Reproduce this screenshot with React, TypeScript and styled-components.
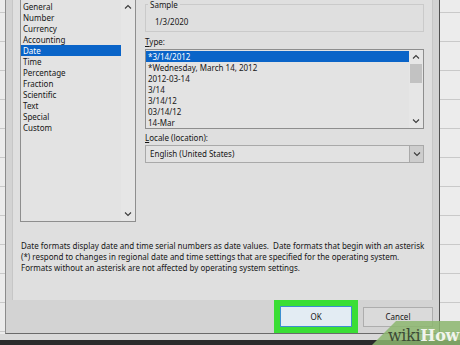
import styled, { createGlobalStyle } from 'styled-components';

const categories = [
  'General',
  'Number',
  'Currency',
  'Accounting',
  'Date',
  'Time',
  'Percentage',
  'Fraction',
  'Scientific',
  'Text',
  'Special',
  'Custom',
];

const types = [
  '*3/14/2012',
  '*Wednesday, March 14, 2012',
  '2012-03-14',
  '3/14',
  '3/14/12',
  '03/14/12',
  '14-Mar',
];

const GlobalStyle = createGlobalStyle`
  html, body {
    margin: 0;
    padding: 0;
    background: #2b2b2b;
  }
  * {
    box-sizing: border-box;
  }
`;

const Screen = styled.div`
  position: relative;
  width: 460px;
  height: 345px;
  overflow: hidden;
  display: flex;
  flex-direction: column;
  background: #2b2b2b;
  font-family: 'Noto Sans', 'Open Sans', sans-serif;
  font-size: 8px;
  color: #161616;
`;

const Main = styled.div`
  display: flex;
  height: 334px;
`;

const SheetEdge = styled.div<{ $width: number }>`
  width: ${({ $width }) => $width}px;
  flex-shrink: 0;
  background: repeating-linear-gradient(
    180deg,
    #ececec 0px,
    #ececec 12px,
    #c9c9c9 12px,
    #c9c9c9 13px,
    #ececec 13px,
    #ececec 29px
  );
`;

const BottomStrip = styled.div`
  height: 6px;
  background: #d9d9d9;
`;

const Dialog = styled.div`
  width: 435px;
  display: flex;
  flex-direction: column;
  background: #d3d3d3;
  border-left: 1px solid #8c8c8c;
  border-right: 1px solid #505050;
  border-bottom: 1px solid #6a6a6a;
`;

const TabPanel = styled.div`
  height: 300px;
  margin: 0 6px;
  background: #dfdfdf;
  border-left: 1px solid #c6c6c6;
  border-right: 1px solid #c6c6c6;
  padding-left: 7px;
  display: flex;
  flex-direction: column;
`;

const TopRow = styled.div`
  display: flex;
  gap: 9px;
`;

const ListBox = styled.div<{ $height: number }>`
  height: ${({ $height }) => $height}px;
  border: 1px solid #8e8e8e;
  background: #e3e3e3;
  display: flex;
`;

const CategoryBox = styled(ListBox)`
  width: 116px;
  margin-top: -1px;
`;

const Items = styled.div`
  flex: 1;
  padding-top: 1px;
  display: flex;
  flex-direction: column;
`;

const Item = styled.div<{ $selected?: boolean }>`
  height: 11px;
  line-height: 11px;
  padding-left: 2px;
  white-space: nowrap;
  background: ${({ $selected }) => ($selected ? '#0a64c8' : 'transparent')};
  color: ${({ $selected }) => ($selected ? '#ffffff' : '#161616')};
`;

const ScrollBar = styled.div`
  width: 14px;
  display: flex;
  flex-direction: column;
  align-items: center;
  justify-content: space-between;
  background: #e6e6e6;
`;

const ScrollTrack = styled.div`
  flex: 1;
  width: 12px;
  padding-top: 1px;
`;

const Thumb = styled.div`
  height: 19px;
  background: #c2c2c2;
`;

const ArrowBox = styled.div`
  height: 13px;
  width: 14px;
  display: flex;
  align-items: center;
  justify-content: center;
`;

const RightColumn = styled.div`
  width: 279px;
  display: flex;
  flex-direction: column;
`;

const SampleGroup = styled.fieldset`
  margin: -1px 0 0 0;
  padding: 0 0 0 9px;
  height: 33px;
  border: 1px solid #cacaca;
  min-width: 0;
`;

const Legend = styled.legend`
  padding: 0 2px;
  margin-left: -7px;
  line-height: 11px;
`;

const SampleValue = styled.div`
  margin-top: 6px;
  line-height: 11px;
`;

const FieldLabel = styled.div<{ $gap: number }>`
  margin-top: ${({ $gap }) => $gap}px;
  line-height: 12px;
  height: 12px;
`;

const Access = styled.span`
  text-decoration: underline;
`;

const TypeBox = styled(ListBox)`
  margin-top: 1px;
`;

const Select = styled.div`
  margin-top: 1px;
  height: 18px;
  border: 1px solid #a9a9a9;
  background: #e2e2e2;
  display: flex;
`;

const SelectValue = styled.div`
  flex: 1;
  padding-left: 4px;
  line-height: 16px;
`;

const SelectButton = styled.div`
  width: 14px;
  background: #cdcdcd;
  border-left: 1px solid #a9a9a9;
  display: flex;
  align-items: center;
  justify-content: center;
`;

const Description = styled.p`
  margin: 18px 0 0 1px;
  line-height: 11px;
  width: 410px;
`;

const Footer = styled.div`
  flex: 1;
  display: flex;
  justify-content: flex-end;
  align-items: center;
  gap: 5px;
  padding-right: 6px;
`;

const Highlight = styled.div`
  border: 6px solid #3ade35;
`;

const Button = styled.button<{ $default?: boolean }>`
  width: ${({ $default }) => ($default ? 72 : 70)}px;
  height: ${({ $default }) => ($default ? 21 : 20)}px;
  margin: 0;
  padding: 0;
  font-family: inherit;
  font-size: 8px;
  color: #161616;
  background: ${({ $default }) => ($default ? '#e3ecf3' : '#dadada')};
  border: 1px solid ${({ $default }) => ($default ? '#3c8fd0' : '#adadad')};
  display: block;
`;

const Watermark = styled.div`
  position: absolute;
  right: 0;
  bottom: 0;
  width: 88px;
  height: 24px;
  background: rgba(140, 182, 110, 0.85);
  clip-path: polygon(24px 0, 100% 0, 100% 100%, 0 100%);
  display: flex;
  align-items: flex-end;
  justify-content: flex-end;
  padding-right: 1px;
  font-family: 'DejaVu Serif', 'Liberation Serif', serif;
  font-size: 16px;
  font-weight: bold;
  letter-spacing: -0.3px;
  line-height: 19px;
`;

const Wiki = styled.span`
  color: #3c4a36;
  font-weight: normal;
`;

const How = styled.span`
  color: #f1f4ec;
`;

const Chevron = ({ up }: { up?: boolean }) => (
  <svg width="8" height="5" viewBox="0 0 8 5">
    <polyline
      points={up ? '1,4.5 4,1.5 7,4.5' : '1,0.5 4,3.5 7,0.5'}
      fill="none"
      stroke="#3a3a3a"
      strokeWidth="1.1"
    />
  </svg>
);

const App = () => {
  return (
    <Screen>
      <GlobalStyle />
      <Main>
        <SheetEdge $width={5} />
        <Dialog>
          <TabPanel>
            <TopRow>
              <CategoryBox $height={223}>
                <Items>
                  {categories.map((name) => (
                    <Item key={name} $selected={name === 'Date'}>
                      {name}
                    </Item>
                  ))}
                </Items>
                <ScrollBar>
                  <ArrowBox>
                    <Chevron up />
                  </ArrowBox>
                  <ArrowBox>
                    <Chevron />
                  </ArrowBox>
                </ScrollBar>
              </CategoryBox>

              <RightColumn>
                <SampleGroup>
                  <Legend>Sample</Legend>
                  <SampleValue>1/3/2020</SampleValue>
                </SampleGroup>

                <FieldLabel $gap={4}>
                  <Access>T</Access>ype:
                </FieldLabel>
                <TypeBox $height={80}>
                  <Items>
                    {types.map((t, i) => (
                      <Item key={t} $selected={i === 0}>
                        {t}
                      </Item>
                    ))}
                  </Items>
                  <ScrollBar>
                    <ArrowBox>
                      <Chevron up />
                    </ArrowBox>
                    <ScrollTrack>
                      <Thumb />
                    </ScrollTrack>
                    <ArrowBox>
                      <Chevron />
                    </ArrowBox>
                  </ScrollBar>
                </TypeBox>

                <FieldLabel $gap={3}>
                  <Access>L</Access>ocale (location):
                </FieldLabel>
                <Select>
                  <SelectValue>English (United States)</SelectValue>
                  <SelectButton>
                    <Chevron />
                  </SelectButton>
                </Select>
              </RightColumn>
            </TopRow>

            <Description>
              Date formats display date and time serial numbers as date values.&nbsp; Date
              formats that begin with an asterisk (*) respond to changes in regional date and
              time settings that are specified for the operating system. Formats without an
              asterisk are not affected by operating system settings.
            </Description>
          </TabPanel>

          <Footer>
            <Highlight>
              <Button $default>OK</Button>
            </Highlight>
            <Button>Cancel</Button>
          </Footer>
        </Dialog>
        <SheetEdge $width={20} />
      </Main>
      <BottomStrip />
      <Watermark>
        <Wiki>wiki</Wiki>
        <How>How</How>
      </Watermark>
    </Screen>
  );
};

export default App;
